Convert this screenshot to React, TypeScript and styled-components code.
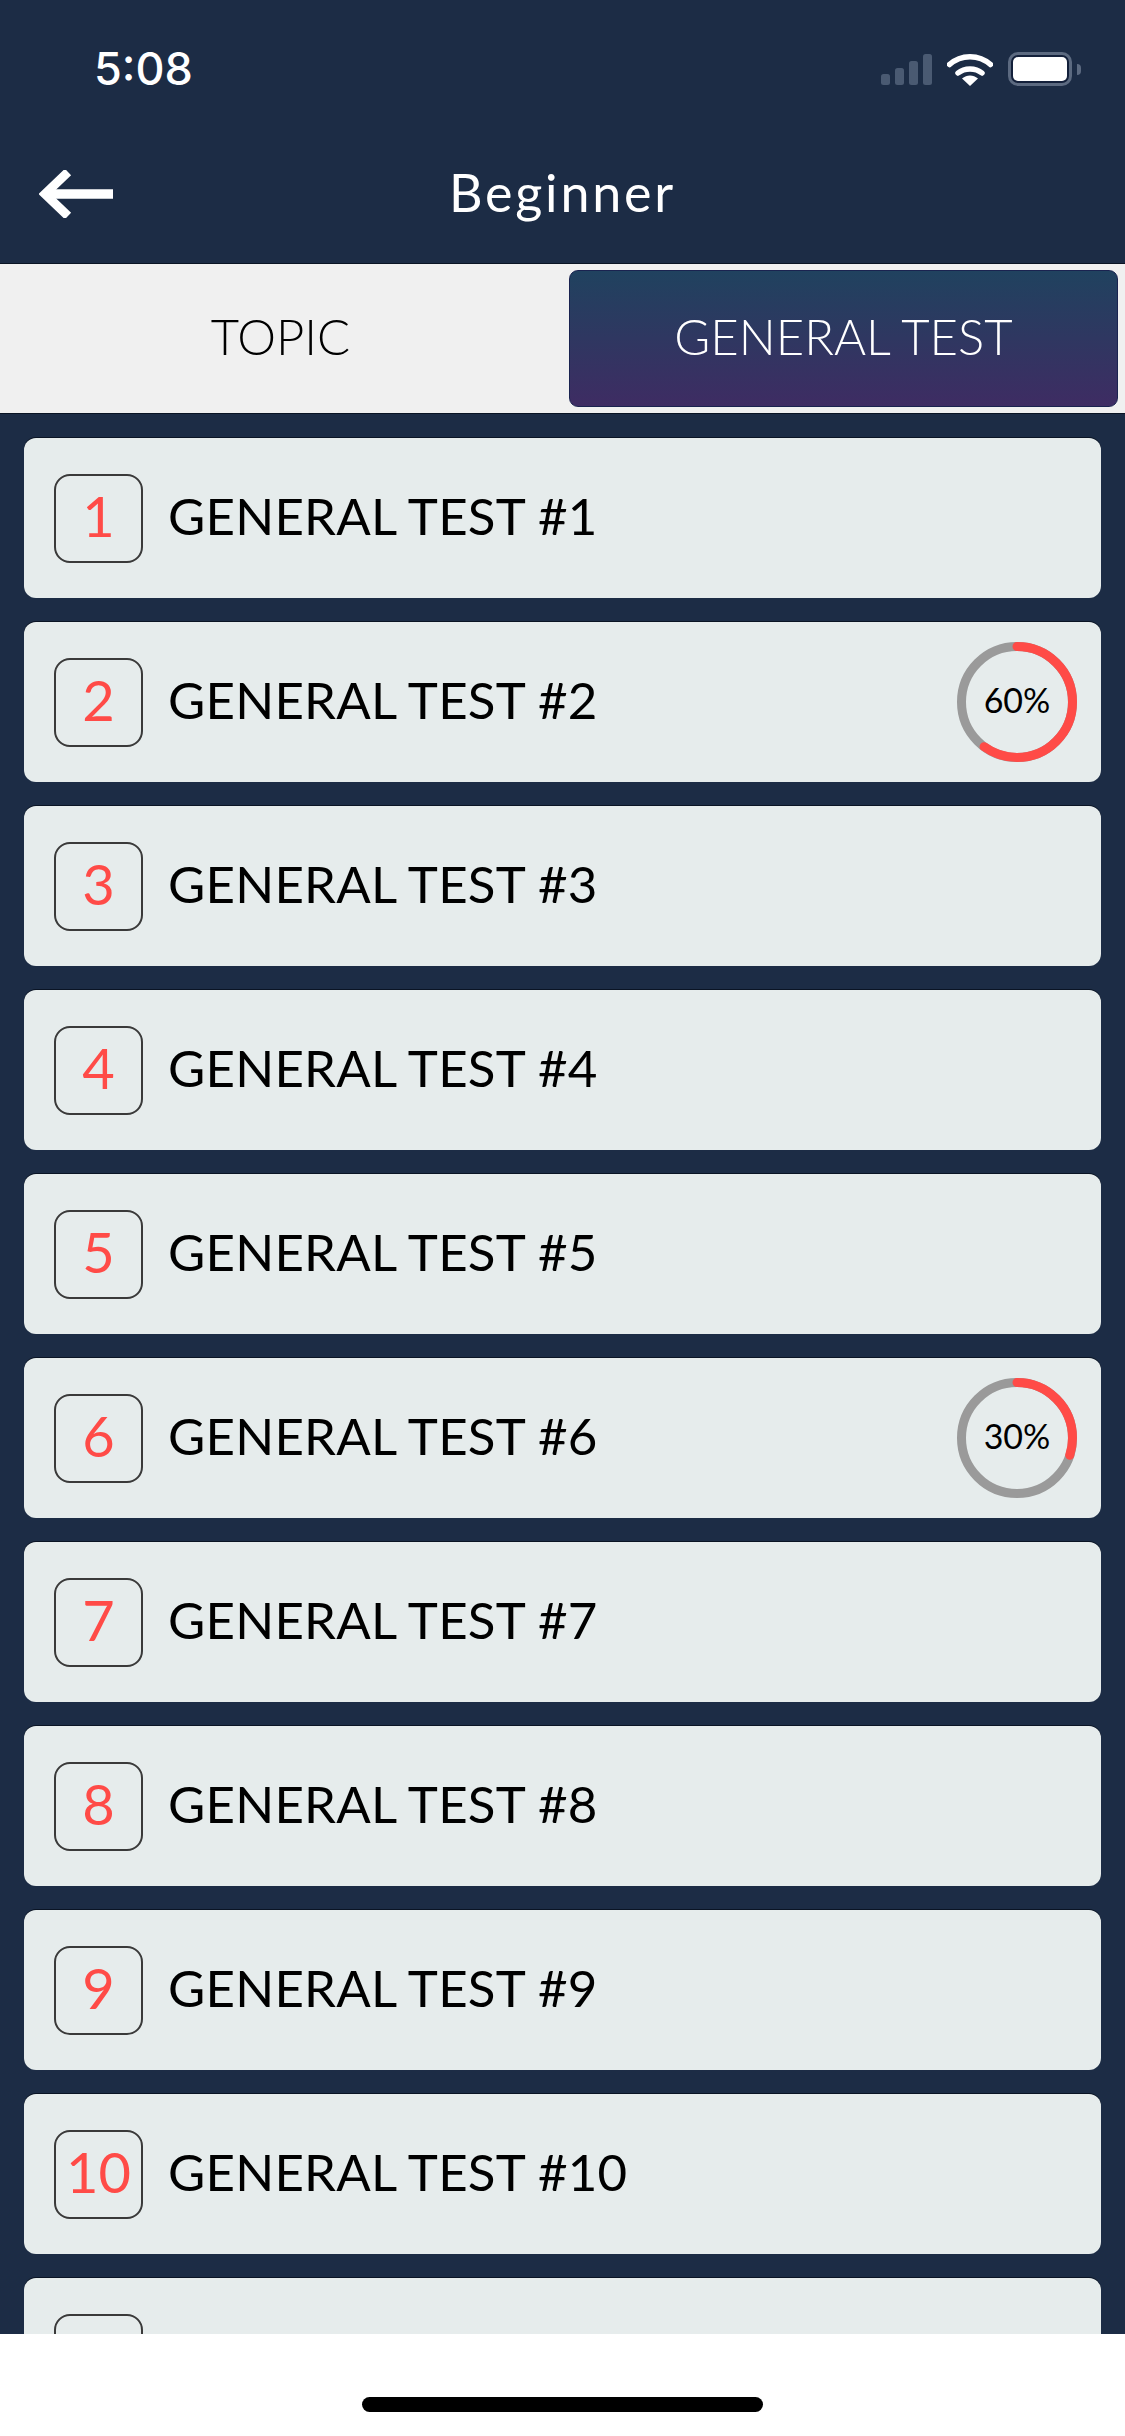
import React from "react";
import styled, { createGlobalStyle } from "styled-components";

const GlobalStyle = createGlobalStyle`
  html, body {
    margin: 0;
    padding: 0;
    background: #fff;
    font-family: "Lato", "Open Sans", sans-serif;
  }
`;

const tests = [
  { id: 1 },
  { id: 2, progress: 60 },
  { id: 3 },
  { id: 4 },
  { id: 5 },
  { id: 6, progress: 30 },
  { id: 7 },
  { id: 8 },
  { id: 9 },
  { id: 10 },
];

function Wifi() {
  return (
    <svg width="46" height="33" viewBox="0 0 46 33">
      <path d="M2.5 11.5C14 1 32 1 43.5 11.5" fill="none" stroke="#fff" strokeWidth="5.5" strokeLinecap="round" />
      <path d="M11 20C17.5 14.5 28.5 14.5 35 20" fill="none" stroke="#fff" strokeWidth="5.5" strokeLinecap="round" />
      <path d="M23 33L15 25.5C20 21.5 26 21.5 31 25.5Z" fill="#fff" />
    </svg>
  );
}

function BackArrow() {
  return (
    <svg width="74" height="48" viewBox="0 0 74 48">
      <path d="M8 24H74" fill="none" stroke="#fff" strokeWidth="9.5" />
      <path d="M29 2L6 24L29 46" fill="none" stroke="#fff" strokeWidth="9" />
    </svg>
  );
}

function ProgressRing({ value }: { value: number }) {
  const r = 55.5;
  const length = 2 * Math.PI * r;
  return (
    <RingBox>
      <svg width="120" height="120" viewBox="0 0 120 120">
        <circle cx="60" cy="60" r={r} fill="none" stroke="#9a9a9a" strokeWidth="9" />
        <circle
          cx="60"
          cy="60"
          r={r}
          fill="none"
          stroke="#ff4b47"
          strokeWidth="9"
          strokeLinecap="round"
          strokeDasharray={`${(length * value) / 100} ${length}`}
          transform="rotate(-90 60 60)"
        />
      </svg>
      <RingLabel>{value}%</RingLabel>
    </RingBox>
  );
}

export default function App() {
  return (
    <>
      <GlobalStyle />
      <Screen>
        <StatusBar>
          <Clock>5:08</Clock>
          <StatusIcons>
            <Signal>
              <Bar $h={11} />
              <Bar $h={17} />
              <Bar $h={24} />
              <Bar $h={31} />
            </Signal>
            <Wifi />
            <Battery>
              <BatteryFill />
            </Battery>
            <BatteryTip />
          </StatusIcons>
        </StatusBar>

        <NavBar>
          <BackButton>
            <BackArrow />
          </BackButton>
          <Title>Beginner</Title>
        </NavBar>

        <Tabs>
          <Tab>TOPIC</Tab>
          <Tab $active>GENERAL TEST</Tab>
        </Tabs>

        <List>
          {tests.map((t) => (
            <Card key={t.id}>
              <NumberBadge>{t.id}</NumberBadge>
              <CardTitle>GENERAL TEST #{t.id}</CardTitle>
              {t.progress ? <ProgressRing value={t.progress} /> : null}
            </Card>
          ))}
          <Card>
            <NumberBadge />
          </Card>
        </List>

        <HomeArea>
          <HomeBar />
        </HomeArea>
      </Screen>
    </>
  );
}

const Screen = styled.div`
  width: 1125px;
  height: 2436px;
  display: flex;
  flex-direction: column;
  overflow: hidden;
  background: #1c2c45;
`;

const StatusBar = styled.div`
  height: 132px;
  flex: none;
  box-sizing: border-box;
  padding: 52px 44px 0 94px;
  display: flex;
  justify-content: space-between;
  align-items: flex-start;
`;

const Clock = styled.span`
  font-family: "Inter", sans-serif;
  font-size: 45px;
  line-height: 34px;
  font-weight: 500;
  color: #fff;
`;

const StatusIcons = styled.div`
  display: flex;
  align-items: center;
  height: 34px;
`;

const Signal = styled.div`
  display: flex;
  align-items: flex-end;
  gap: 5px;
  height: 31px;
  margin-right: 15px;
`;

const Bar = styled.div<{ $h: number }>`
  width: 9px;
  height: ${(p) => p.$h}px;
  border-radius: 2.5px;
  background: #4a5a72;
`;

const Battery = styled.div`
  width: 64px;
  height: 34px;
  margin-left: 15px;
  box-sizing: border-box;
  border: 3px solid #5c6a80;
  border-radius: 10px;
  padding: 2px;
  background: #13203a;
`;

const BatteryFill = styled.div`
  width: 100%;
  height: 100%;
  border-radius: 5px;
  background: #fff;
`;

const BatteryTip = styled.div`
  width: 4px;
  height: 11px;
  margin-left: 5px;
  border-radius: 0 4px 4px 0;
  background: #5c6a80;
`;

const NavBar = styled.div`
  position: relative;
  height: 131px;
  flex: none;
  display: flex;
  align-items: center;
  justify-content: center;
`;

const BackButton = styled.div`
  position: absolute;
  left: 39px;
  top: 38px;
  display: flex;
`;

const Title = styled.h1`
  margin: 0 0 11px;
  font-size: 52px;
  font-weight: 400;
  letter-spacing: 2.8px;
  color: #fff;
`;

const Tabs = styled.div`
  height: 151px;
  flex: none;
  box-sizing: border-box;
  padding: 6px 7px 6px 0;
  display: grid;
  grid-template-columns: 561px 1fr;
  column-gap: 8px;
  background: #f0f0f0;
  border-top: 1px solid #0a1424;
  border-bottom: 1px solid #0a1424;
`;

const Tab = styled.div<{ $active?: boolean }>`
  display: flex;
  align-items: center;
  justify-content: center;
  box-sizing: border-box;
  padding-bottom: 6px;
  font-size: 49px;
  font-weight: 300;
  color: ${(p) => (p.$active ? "#fff" : "#000")};
  border-radius: 9px;
  border: 1px solid ${(p) => (p.$active ? "#1a2350" : "transparent")};
  background: ${(p) => (p.$active ? "linear-gradient(180deg, #20425f 0%, #3e2c63 100%)" : "transparent")};
`;

const List = styled.div`
  flex: 1;
  min-height: 0;
  overflow: hidden;
  display: flex;
  flex-direction: column;
  gap: 24px;
  padding: 24px 24px 0;
`;

const Card = styled.div`
  height: 160px;
  flex: none;
  box-sizing: border-box;
  padding: 0 24px 0 30px;
  display: flex;
  align-items: center;
  background: #e6ecec;
  border-radius: 12px;
  box-shadow: 0 -1px 0 #0a1424;
`;

const NumberBadge = styled.div`
  width: 89px;
  height: 89px;
  flex: none;
  box-sizing: border-box;
  padding-bottom: 5px;
  display: flex;
  align-items: center;
  justify-content: center;
  border: 2px solid #3a3a3a;
  border-radius: 16px;
  font-size: 56px;
  font-weight: 400;
  color: #ff4b47;
`;

const CardTitle = styled.span`
  margin: 0 0 6px 25px;
  font-size: 51px;
  font-weight: 400;
  letter-spacing: 0.25px;
  color: #000;
`;

const RingBox = styled.div`
  position: relative;
  width: 120px;
  height: 120px;
  margin-left: auto;
`;

const RingLabel = styled.span`
  position: absolute;
  inset: 0 0 5px;
  display: flex;
  align-items: center;
  justify-content: center;
  font-size: 34px;
  color: #000;
`;

const HomeArea = styled.div`
  height: 102px;
  flex: none;
  box-sizing: border-box;
  padding-top: 63px;
  display: flex;
  justify-content: center;
  background: #fff;
`;

const HomeBar = styled.div`
  width: 401px;
  height: 15px;
  border-radius: 8px;
  background: #000;
`;
